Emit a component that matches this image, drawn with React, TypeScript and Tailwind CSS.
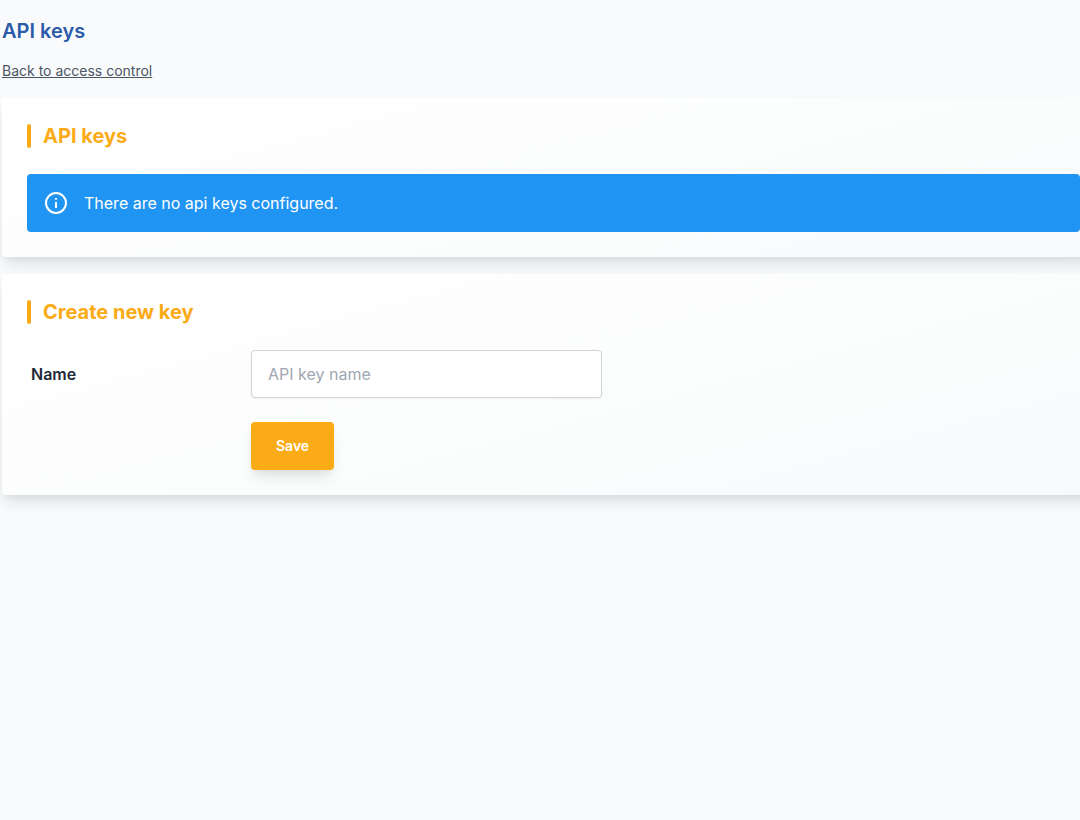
import type { ReactNode } from "react";

function InfoIcon() {
  return (
    <svg
      className="size-6 shrink-0"
      viewBox="0 0 24 24"
      fill="none"
      stroke="currentColor"
      strokeWidth="2"
      aria-hidden="true"
    >
      <circle cx="12" cy="12" r="10" />
      <path d="M12 7v1.7M12 11v6" />
    </svg>
  );
}

function Card({ title, children }: { title: string; children: ReactNode }) {
  return (
    <section className="rounded-sm bg-linear-165 from-white via-[#fcfdfd] to-[#f8f9fb] p-6 pb-[25px] pl-[25px] shadow-[0_10px_15px_-3px_rgba(0,0,0,0.1),0_4px_6px_-2px_rgba(0,0,0,0.05)]">
      <div className="mb-[26px] flex items-center gap-3 pt-0.5">
        <span className="h-6 w-1 rounded-sm bg-[#fbab15]" />
        <h2 className="text-xl leading-6 font-bold text-[#fbab15]">{title}</h2>
      </div>
      {children}
    </section>
  );
}

export default function App() {
  return (
    <div className="min-h-screen overflow-x-hidden bg-[#f9fafc] font-['Inter',sans-serif] text-gray-800">
      <main className="-mr-6 pt-4 pb-8 pl-0.5">
        <h1 className="text-xl leading-[30px] font-semibold text-[#2b5ba9]">API keys</h1>
        <div className="mt-3.5 mb-[17px] leading-5">
          <a href="#access-control" className="text-sm text-gray-600 underline">
            Back to access control
          </a>
        </div>
        <div className="flex flex-col gap-[17px]">
          <Card title="API keys">
            <div
              role="status"
              className="flex h-[58px] items-center gap-4 rounded-sm bg-[#2094f3] px-[17px] text-white"
            >
              <InfoIcon />
              <p>There are no api keys configured.</p>
            </div>
          </Card>
          <Card title="Create new key">
            <form
              className="grid grid-cols-[220px_1fr] gap-y-6 pl-1"
              onSubmit={(event) => event.preventDefault()}
            >
              <label htmlFor="key-name" className="self-center font-semibold">
                Name
              </label>
              <input
                id="key-name"
                type="text"
                placeholder="API key name"
                className="h-12 w-full max-w-[351px] rounded-sm border border-[#d2d3d7] bg-white px-4 shadow-xs placeholder:text-[#9fa6b2]"
              />
              <button
                type="submit"
                className="col-start-2 h-12 justify-self-start rounded-sm bg-[#fbab15] px-[25px] text-sm font-semibold text-white shadow-[0_10px_15px_-3px_rgba(0,0,0,0.1),0_4px_6px_-2px_rgba(0,0,0,0.05)]"
              >
                Save
              </button>
            </form>
          </Card>
        </div>
      </main>
    </div>
  );
}
